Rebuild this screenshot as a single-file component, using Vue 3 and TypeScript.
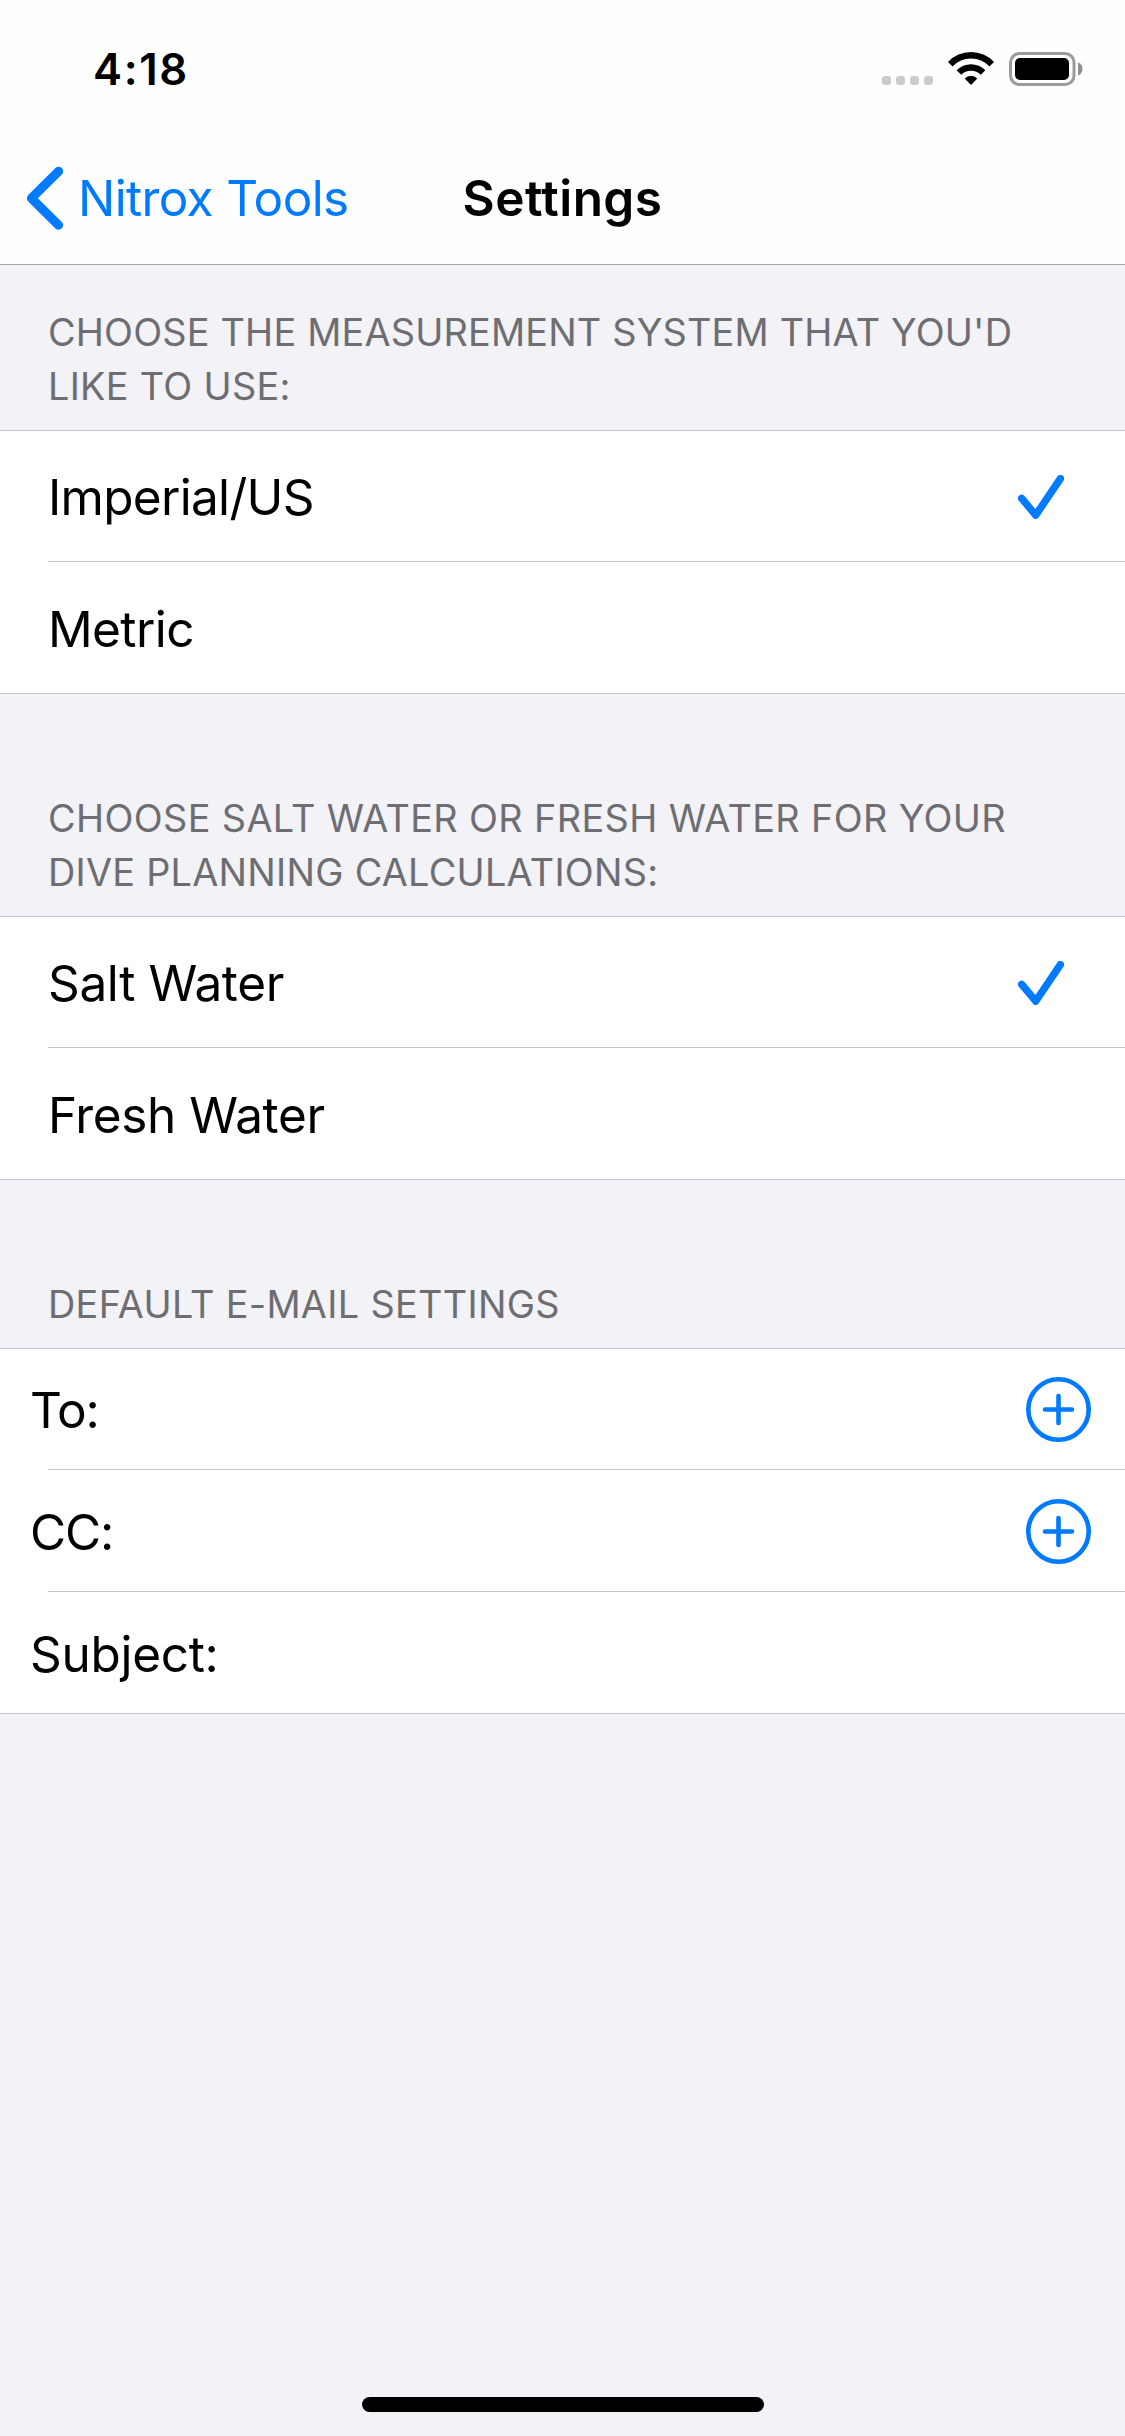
<script setup lang="ts">
import { ref } from 'vue'

interface Line {
  text: string
  tracking: number
}

interface Row extends Line {
  action?: 'check' | 'add'
}

interface Section {
  id: string
  title: Line[]
  compact?: boolean
  rows: Row[]
}

const sections = ref<Section[]>([
  {
    id: 'units',
    title: [
      { text: "Choose the measurement system that you'd", tracking: 0.2 },
      { text: 'like to use:', tracking: 0.3 },
    ],
    rows: [
      { text: 'Imperial/US', tracking: -0.7, action: 'check' },
      { text: 'Metric', tracking: -0.6 },
    ],
  },
  {
    id: 'water',
    title: [
      { text: 'Choose salt water or fresh water for your', tracking: 0.38 },
      { text: 'dive planning calculations:', tracking: 0.27 },
    ],
    rows: [
      { text: 'Salt Water', tracking: -0.37, action: 'check' },
      { text: 'Fresh Water', tracking: -0.4 },
    ],
  },
  {
    id: 'email',
    title: [{ text: 'Default e-mail settings', tracking: 0.32 }],
    compact: true,
    rows: [
      { text: 'To:', tracking: -1.1, action: 'add' },
      { text: 'CC:', tracking: -1.1, action: 'add' },
      { text: 'Subject:', tracking: -0.3 },
    ],
  },
])
</script>

<template>
  <div class="screen">
    <header class="top">
      <div class="status">
        <span class="time">4:18</span>
        <svg class="indicators" width="201" height="35" viewBox="0 0 201 35">
          <g fill="#cbcbcb">
            <rect v-for="n in 4" :key="n" :x="(n - 1) * 14" y="24" width="9" height="9" rx="3.2" />
          </g>
          <g transform="translate(66 0)">
            <path d="M0 10A31.5 31.5 0 0 1 46 10L41.4 14.5A25 25 0 0 0 4.6 14.5Z" />
            <path d="M8.6 18.2A20.3 20.3 0 0 1 37.4 18.2L32.8 22.8A13.6 13.6 0 0 0 13.2 22.8Z" />
            <path d="M16.7 26.4A9 9 0 0 1 29.3 26.4L23 33Z" />
          </g>
          <rect x="128.5" y="1.5" width="63.5" height="31" rx="9" fill="none" stroke="#9c9c9c" stroke-width="3" />
          <rect x="133" y="6" width="54" height="22" rx="5" />
          <path d="M196 10.6A6.8 6.8 0 0 1 196 23.4Z" fill="#8f8f8f" />
        </svg>
      </div>
      <nav class="nav">
        <a class="back">
          <svg class="chevron" width="38" height="64" viewBox="0 0 38 64">
            <path d="M33.6 5.2L6.4 32.2L33.6 59.2" />
          </svg>
          <span>Nitrox Tools</span>
        </a>
        <h1 class="title">Settings</h1>
      </nav>
    </header>

    <main class="content">
      <section v-for="s in sections" :key="s.id" class="section" :class="{ compact: s.compact }">
        <h2 class="heading">
          <span v-for="l in s.title" :key="l.text" class="line" :style="{ letterSpacing: l.tracking + 'px' }">{{ l.text }}</span>
        </h2>
        <ul class="group">
          <li v-for="r in s.rows" :key="r.text" class="row">
            <span class="label" :style="{ letterSpacing: r.tracking + 'px' }">{{ r.text }}</span>
            <svg v-if="r.action === 'check'" class="check" width="46" height="44" viewBox="0 0 46 44">
              <path d="M3.7 23.4L17.7 40.2L42.4 3.6" />
            </svg>
            <svg v-else-if="r.action === 'add'" class="add" width="65" height="65" viewBox="0 0 65 65">
              <circle cx="32.5" cy="32.5" r="30.2" />
              <path d="M32.5 19V46M19 32.5H46" />
            </svg>
          </li>
        </ul>
      </section>
    </main>

    <footer class="home"><span class="bar"></span></footer>
  </div>
</template>

<style>
body {
  margin: 0;
  background: #f2f2f7;
}
</style>

<style scoped>
.screen {
  display: flex;
  flex-direction: column;
  width: 1125px;
  height: 2436px;
  overflow: hidden;
  background: #f2f2f7;
  color: #000;
  font-family: Inter, 'Liberation Sans', sans-serif;
}

.top {
  flex: none;
  background: #fefefe;
  border-bottom: 1px solid #a8a8ab;
}

.status {
  box-sizing: border-box;
  display: flex;
  justify-content: space-between;
  align-items: flex-start;
  height: 132px;
  padding: 52px 42px 0 93px;
}

.time {
  padding-top: 1px;
  font-size: 43.6px;
  font-weight: 600;
  line-height: 34px;
  letter-spacing: 1.6px;
}

.nav {
  display: grid;
  grid-template-columns: minmax(0, 1fr) auto minmax(0, 1fr);
  align-items: center;
  height: 132px;
  font-size: 49.5px;
  line-height: 60px;
}

.back {
  display: flex;
  align-items: center;
  gap: 15px;
  padding-left: 25px;
  color: #007aff;
  letter-spacing: -0.66px;
  white-space: nowrap;
}

.chevron {
  flex: none;
  fill: none;
  stroke: #007aff;
  stroke-width: 9;
  stroke-linecap: round;
  stroke-linejoin: round;
}

.title {
  margin: 0;
  font-size: 49.5px;
  font-weight: 600;
  letter-spacing: 0.45px;
}

.content {
  flex: 1;
}

.heading {
  display: flex;
  flex-direction: column;
  margin: 0;
  padding: 97px 48px 17px;
  color: #6d6d72;
  font-size: 37.8px;
  font-weight: 400;
  line-height: 54px;
  text-transform: uppercase;
  white-space: nowrap;
}

.section:first-child .heading {
  padding-top: 40px;
}

.group {
  margin: 0;
  padding: 0;
  list-style: none;
  background: #fff;
  border-top: 1px solid #c6c6c8;
  border-bottom: 1px solid #c6c6c8;
}

.row {
  box-sizing: border-box;
  display: flex;
  justify-content: space-between;
  align-items: center;
  height: 131px;
  padding: 0 61px 0 48px;
  background: linear-gradient(#c6c6c8, #c6c6c8) 48px 100% / 100% 1px no-repeat;
}

.row:last-child {
  background: none;
}

.label {
  padding-top: 2px;
  font-size: 49.5px;
  line-height: 60px;
  white-space: nowrap;
}

.row:first-child .label {
  padding-top: 0;
}

.compact .row {
  height: 122px;
  padding: 0 34px 0 30px;
}

.compact .row:first-child,
.compact .row:last-child {
  height: 121px;
}

.check {
  fill: none;
  stroke: #007aff;
  stroke-width: 7.4;
  stroke-linecap: round;
  stroke-linejoin: round;
}

.add {
  fill: none;
  stroke: #007aff;
  stroke-width: 4.6;
  stroke-linecap: round;
}

.home {
  display: flex;
  justify-content: center;
  padding: 0 0 24px 1px;
}

.bar {
  width: 402px;
  height: 15px;
  border-radius: 8px;
  background: #000;
}
</style>
